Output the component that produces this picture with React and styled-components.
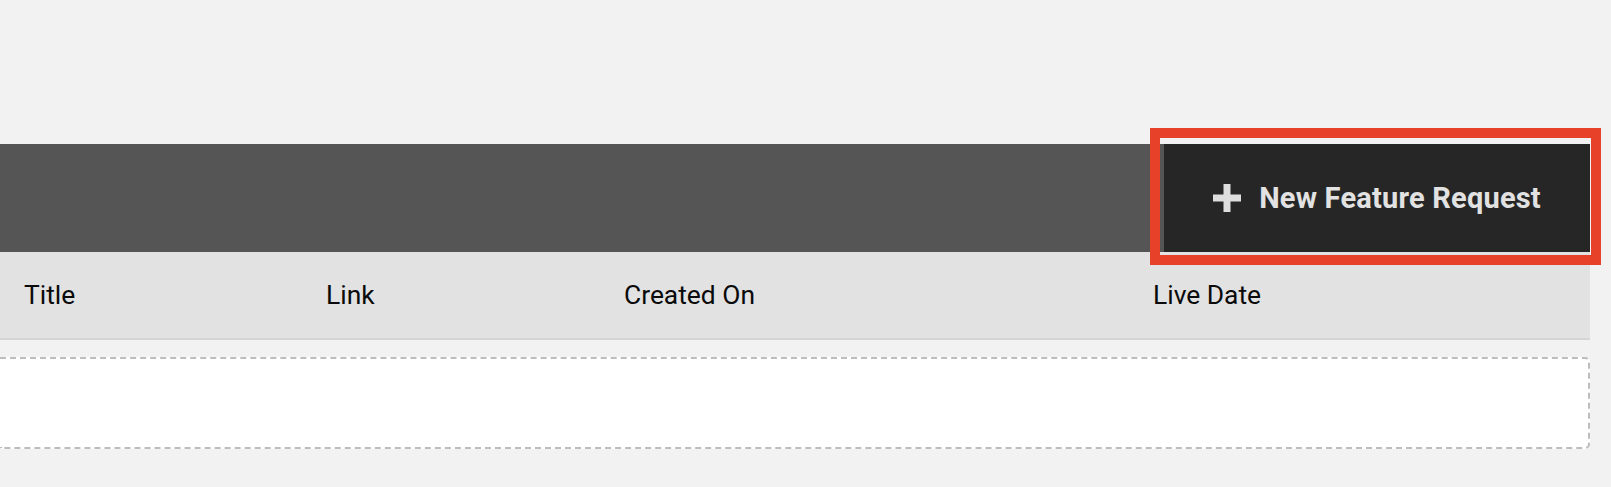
import React from 'react';
import styled, { createGlobalStyle } from 'styled-components';

const GlobalStyle = createGlobalStyle`
  html, body {
    margin: 0;
    padding: 0;
    background: #f2f2f2;
    font-family: Roboto, "Liberation Sans", sans-serif;
  }
`;

const Page = styled.div`
  padding: 144px 21px 0 0;
  min-height: 487px;
  box-sizing: border-box;
`;

const Toolbar = styled.div`
  height: 108px;
  background: #555555;
  display: flex;
  justify-content: flex-end;
`;

const AddButton = styled.button`
  position: relative;
  width: 426px;
  height: 108px;
  border: none;
  background: #262626;
  color: #e2e2e2;
  font-family: Roboto, "Liberation Sans", sans-serif;
  font-weight: 700;
  font-size: 29px;
  letter-spacing: 0.2px;
  display: flex;
  align-items: center;
  justify-content: center;
  gap: 18px;
  cursor: pointer;
  padding: 0;
`;

const Highlight = styled.span`
  position: absolute;
  top: -16px;
  left: -14px;
  right: -11px;
  bottom: -13px;
  border: 10px solid #e8412a;
  pointer-events: none;
`;

const HeaderRow = styled.div`
  display: grid;
  grid-template-columns: 297px 298px 530px 1fr;
  height: 86px;
  background: #e2e2e2;
  border-bottom: 2px solid #d5d5d5;
`;

const HeaderCell = styled.div`
  display: flex;
  align-items: center;
  padding-left: ${p => p.$pad}px;
  font-size: 26.4px;
  color: #0a0a0a;
`;

const EmptyBox = styled.div`
  margin-top: 17px;
  height: 92px;
  box-sizing: border-box;
  background: #ffffff;
  border: 2px dashed #bdbdbd;
  border-left: none;
  border-radius: 0 5px 5px 0;
`;

const PlusIcon = () => (
  <svg width="28" height="28" viewBox="0 0 28 28">
    <rect x="10.5" y="0" width="7" height="28" fill="#dedede" />
    <rect x="0" y="10.5" width="28" height="7" fill="#dedede" />
  </svg>
);

const columns = [
  { label: 'Title', pad: 24 },
  { label: 'Link', pad: 29 },
  { label: 'Created On', pad: 29 },
  { label: 'Live Date', pad: 28 },
];

export default function App() {
  return (
    <>
      <GlobalStyle />
      <Page>
        <Toolbar>
          <AddButton>
            <PlusIcon />
            <span>New Feature Request</span>
            <Highlight />
          </AddButton>
        </Toolbar>
        <HeaderRow>
          {columns.map(c => (
            <HeaderCell key={c.label} $pad={c.pad}>{c.label}</HeaderCell>
          ))}
        </HeaderRow>
        <EmptyBox />
      </Page>
    </>
  );
}
